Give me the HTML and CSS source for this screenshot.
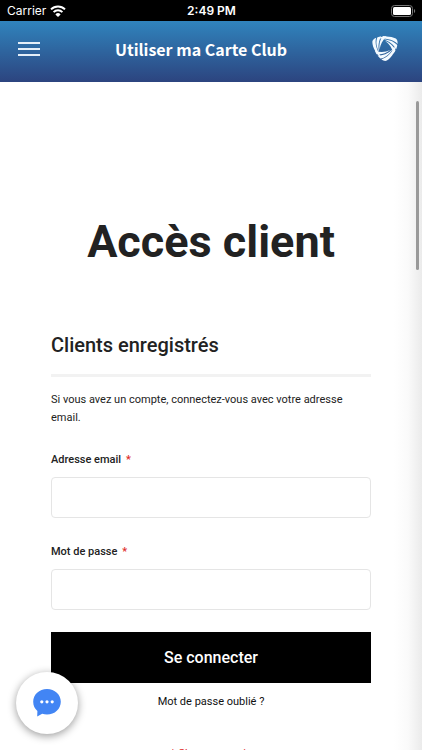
FILE: index.html
```
<!DOCTYPE html>
<html lang="fr">
<head>
    <meta charset="UTF-8">
    <meta name="viewport" content="width=device-width, initial-scale=1.0">
    <title>Utiliser ma Carte Club</title>
    <link rel="stylesheet" href="styles.css">
</head>
<body>
    <!-- Status bar -->
    <div class="status-bar">
        <div class="carrier">
            <span>Carrier</span>
            <svg class="wifi" viewBox="0 0 16 12" aria-hidden="true">
                <path d="M1 4.400a9.900 9.900 0 0 1 14 0" />
                <path d="M3.600 7.100a6.200 6.200 0 0 1 8.800 0" />
                <path class="wifi-dot" d="M8 12 5.400 9.400a3.700 3.700 0 0 1 5.200 0z" />
            </svg>
        </div>
        <span class="time">2:49 PM</span>
        <svg class="battery" viewBox="0 0 25 12" aria-hidden="true">
            <rect class="battery-case" x="0.5" y="0.5" width="21" height="11" rx="3" />
            <rect class="battery-level" x="2" y="2" width="18" height="8" rx="1.5" />
            <path class="battery-tip" d="M23 4v4c1.600-.6 1.600-3.400 0-4z" />
        </svg>
    </div>

    <!-- Header -->
    <header class="header">
        <button class="menu-btn" type="button" aria-label="Menu">
            <span class="menu-line"></span>
            <span class="menu-line"></span>
            <span class="menu-line"></span>
        </button>
        <p class="header-title">Utiliser ma Carte Club</p>
        <a class="logo" href="#" aria-label="Carte Club">
            <svg viewBox="0 0 26 26" aria-hidden="true">
                <defs>
                    <g id="blade">
                        <path d="M4.500 2.700C10-.2 18.500-.4 23.800 2.600c1.500 1.100 2 3 1.700 5.400C21.500 3.900 15 2.200 4.500 2.700z" />
                        <path d="M11 3.200c6.800.5 11.500 2.400 14.300 6.200l-1.100 3.800C21.500 8.500 17.500 5.300 11 3.200z" />
                        <path d="M13 4.800c5 2 8.600 5.100 10.500 9.800l-2 3.200C20.200 12.500 17.800 8.200 13 4.800z" />
                    </g>
                </defs>
                <use href="#blade" />
                <use href="#blade" transform="rotate(120 13 11)" />
                <use href="#blade" transform="rotate(240 13 11)" />
            </svg>
        </a>
    </header>

    <!-- Login page -->
    <main class="page">
        <h1>Accès client</h1>
        <form class="login-form" action="#">
            <h2>Clients enregistrés</h2>
            <p class="note">Si vous avez un compte, connectez-vous avec votre adresse email.</p>
            <div class="form-group">
                <label for="email">Adresse email <span class="required">*</span></label>
                <input type="email" id="email" name="email" required>
            </div>
            <div class="form-group">
                <label for="password">Mot de passe <span class="required">*</span></label>
                <input type="password" id="password" name="password" required>
            </div>
            <button class="submit-btn" type="submit">Se connecter</button>
            <a class="forgot" href="#">Mot de passe oublié ?</a>
            <p class="required-note">* Champs requis</p>
        </form>
        <div class="scrollbar"></div>
    </main>

    <!-- Chat bubble -->
    <button class="chat-btn" type="button" aria-label="Chat">
        <svg viewBox="0 0 28 28" aria-hidden="true">
            <path class="bubble" d="M14 0C6.200 0 .2 5.600.2 12.800c0 3.700 1.500 6.900 4.200 9.200L4.200 27.500l5-2.700c1.500.5 3.100.8 4.800.8 7.800 0 13.800-5.600 13.800-12.800S21.800 0 14 0z" />
            <circle cx="8.800" cy="12.800" r="1.600" />
            <circle cx="14" cy="12.800" r="1.600" />
            <circle cx="19.200" cy="12.800" r="1.600" />
        </svg>
    </button>
</body>
</html>
```

FILE: styles.css
```
* {
    box-sizing: border-box;
}

body {
    margin: 0;
    height: 100vh;
    display: flex;
    flex-direction: column;
    overflow: hidden;
    background-color: #fff;
    color: #222;
    font-family: Roboto, "Liberation Sans", sans-serif;
}

h1, h2, p {
    margin: 0;
}

/* Status bar */
.status-bar {
    display: grid;
    grid-template-columns: 1fr auto 1fr;
    align-items: center;
    flex-shrink: 0;
    height: 21px;
    padding: 0 6px 0 7px;
    background-color: #000;
    color: #fff;
    font-family: Inter, sans-serif;
    font-size: 12px;
}

.carrier {
    display: flex;
    align-items: center;
    gap: 4px;
}

.wifi {
    width: 16px;
    height: 12px;
    fill: none;
    stroke: #fff;
    stroke-width: 2;
}

.wifi-dot {
    fill: #fff;
    stroke: none;
}

.time {
    font-weight: 600;
}

.battery {
    justify-self: end;
    width: 25px;
    height: 12px;
}

.battery-case {
    fill: none;
    stroke: #777;
}

.battery-level {
    fill: #fff;
}

.battery-tip {
    fill: #777;
}

/* Header */
.header {
    display: grid;
    grid-template-columns: 1fr auto 1fr;
    align-items: center;
    flex-shrink: 0;
    height: 61px;
    padding: 0 24px 5px 4px;
    background: linear-gradient(#3084bd, #2c447f);
    color: #fff;
}

.menu-btn {
    display: flex;
    flex-direction: column;
    gap: 4px;
    width: 50px;
    padding: 0 14px;
    border: none;
    background: none;
    cursor: pointer;
}

.menu-line {
    width: 22px;
    height: 2px;
    background-color: #e4eef8;
}

.header-title {
    font-family: "Noto Sans CJK SC", sans-serif;
    font-size: 16px;
    font-weight: 700;
}

.logo {
    justify-self: end;
    height: 26px;
}

.logo svg {
    width: 26px;
    height: 26px;
    fill: #f4faff;
}

/* Login page */
.page {
    position: relative;
    flex: 1;
    min-height: 0;
    overflow: hidden;
    padding: 130px 51px 0;
    background: linear-gradient(to left, #ebebeb, #fafafa 14px, #fff 28px);
}

h1 {
    margin-bottom: 59px;
    font-size: 45px;
    font-weight: 700;
    line-height: 60px;
    text-align: center;
}

.login-form {
    display: flex;
    flex-direction: column;
}

h2 {
    padding-bottom: 15px;
    border-bottom: 3px solid #f2f2f2;
    font-size: 20px;
    font-weight: 500;
    line-height: 28px;
}

.note {
    margin: 14px 0 24px;
    font-size: 11px;
    line-height: 18px;
}

.form-group {
    display: flex;
    flex-direction: column;
    gap: 8px;
    margin-bottom: 25px;
}

.form-group + .submit-btn {
    margin-top: -3px;
}

label {
    font-size: 11px;
    font-weight: 500;
    line-height: 18px;
}

.required {
    margin-left: 2px;
    color: #e02b27;
}

input {
    width: 100%;
    height: 41px;
    padding: 0 10px;
    border: 1px solid #e5e5e5;
    border-radius: 4px;
    background-color: #fff;
    font-size: 16px;
}

.submit-btn {
    height: 51px;
    margin-bottom: 10px;
    border: none;
    background-color: #000;
    color: #fff;
    font-family: inherit;
    font-size: 16px;
    font-weight: 500;
    cursor: pointer;
}

.forgot {
    align-self: center;
    color: #111;
    font-size: 11px;
    line-height: 18px;
    text-decoration: none;
}

.required-note {
    margin-top: 34px;
    color: #e02b27;
    font-size: 11px;
    line-height: 18px;
    text-align: center;
}

.scrollbar {
    position: absolute;
    top: 19px;
    right: 3px;
    width: 3px;
    height: 169px;
    border-radius: 2px;
    background-color: #999;
}

/* Chat bubble */
.chat-btn {
    position: fixed;
    bottom: 16px;
    left: 16px;
    display: flex;
    align-items: center;
    justify-content: center;
    width: 62px;
    height: 62px;
    padding: 0;
    border: none;
    border-radius: 50%;
    background-color: #fff;
    box-shadow: 0 2px 8px rgba(0, 0, 0, 0.4);
    cursor: pointer;
}

.chat-btn svg {
    width: 28px;
    height: 28px;
    fill: #fff;
}

.chat-btn .bubble {
    fill: #4285f4;
}
```
